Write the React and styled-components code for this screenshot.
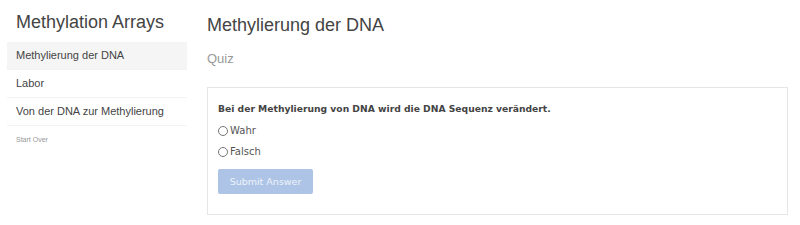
import React, { useState } from 'react';
import styled, { createGlobalStyle } from 'styled-components';

const GlobalStyle = createGlobalStyle`
  html, body {
    margin: 0;
    padding: 0;
    background: #fff;
  }
  body {
    font-family: "Liberation Sans", Arial, sans-serif;
    color: #333;
  }
`;

const Page = styled.div`
  display: flex;
  gap: 20px;
  padding: 0 12px 0 7px;
`;

const Sidebar = styled.aside`
  width: 180px;
  flex-shrink: 0;
`;

const SideTitle = styled.h1`
  margin: 0;
  padding: 12px 0 0 9px;
  height: 30px;
  font-size: 18px;
  font-weight: normal;
  color: #444;
  line-height: 20px;
`;

const Nav = styled.ul`
  list-style: none;
  margin: 0;
  padding: 0;
`;

const NavItem = styled.li`
  height: 27px;
  line-height: 27px;
  padding-left: 9px;
  font-size: 11px;
  color: #444;
  background: ${(p) => (p.$active ? '#f5f5f5' : '#fff')};
  border-bottom: 1px solid #f3f3f3;
`;

const StartOver = styled.div`
  padding: 10px 0 0 9px;
  font-size: 7px;
  color: #999;
`;

const Main = styled.main`
  flex: 1;
`;

const Heading = styled.h2`
  margin: 0;
  padding-top: 13px;
  font-size: 18px;
  font-weight: normal;
  color: #444;
  line-height: 24px;
`;

const Subtitle = styled.div`
  margin-top: 14px;
  font-size: 13px;
  color: #999;
  line-height: 16px;
`;

const QuizBox = styled.div`
  box-sizing: border-box;
  margin-top: 20px;
  height: 128px;
  border: 1px solid #e6e6e6;
  padding: 13px 10px 0;
  font-family: "DejaVu Sans", sans-serif;
`;

const Question = styled.p`
  margin: 0 0 3px;
  font-size: 9.2px;
  font-weight: bold;
  color: #444;
  line-height: 16px;
`;

const Option = styled.label`
  display: flex;
  align-items: center;
  gap: 2px;
  height: 21px;
  font-size: 10px;
  color: #555;

  input {
    margin: 0;
    width: 10px;
    height: 10px;
  }
`;

const SubmitButton = styled.button`
  margin-top: 7px;
  width: 95px;
  height: 25px;
  border: none;
  border-radius: 2px;
  background: #adc4e6;
  color: #eef3fa;
  font-family: "DejaVu Sans", sans-serif;
  font-size: 9.5px;
`;

const App = () => {
  const [answer, setAnswer] = useState('');

  return (
    <>
      <GlobalStyle />
      <Page>
        <Sidebar>
          <SideTitle>Methylation Arrays</SideTitle>
          <Nav>
            <NavItem $active>Methylierung der DNA</NavItem>
            <NavItem>Labor</NavItem>
            <NavItem>Von der DNA zur Methylierung</NavItem>
          </Nav>
          <StartOver>Start Over</StartOver>
        </Sidebar>
        <Main>
          <Heading>Methylierung der DNA</Heading>
          <Subtitle>Quiz</Subtitle>
          <QuizBox>
            <Question>Bei der Methylierung von DNA wird die DNA Sequenz verändert.</Question>
            <Option>
              <input type="radio" name="q" checked={answer === 'wahr'} onChange={() => setAnswer('wahr')} />
              Wahr
            </Option>
            <Option>
              <input type="radio" name="q" checked={answer === 'falsch'} onChange={() => setAnswer('falsch')} />
              Falsch
            </Option>
            <SubmitButton disabled={!answer}>Submit Answer</SubmitButton>
          </QuizBox>
        </Main>
      </Page>
    </>
  );
};

export default App;
